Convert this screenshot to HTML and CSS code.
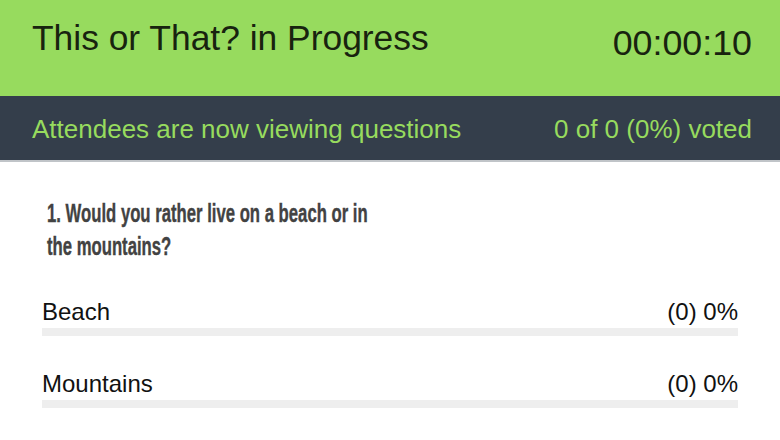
FILE: index.html
```html
<!DOCTYPE html>
<html lang="en">
<head>
<meta charset="utf-8">
<title>This or That? in Progress</title>
<link rel="stylesheet" href="styles.css">
</head>
<body>
  <header class="topbar">
    <h1 class="title">This or That? in Progress</h1>
    <div class="timer">00:00:10</div>
  </header>
  <div class="statusbar">
    <span class="status-text">Attendees are now viewing questions</span>
    <span class="status-count">0 of 0 (0%) voted</span>
  </div>
  <main class="content">
    <div class="question-wrap">
      <h2 class="question">1. Would you rather live on a beach or in the mountains?</h2>
    </div>
    <ul class="options">
      <li class="option">
        <div class="option-row"><span class="option-label">Beach</span><span class="option-value">(0) 0%</span></div>
        <div class="bar"><div class="bar-fill" style="width:0%"></div></div>
      </li>
      <li class="option">
        <div class="option-row"><span class="option-label">Mountains</span><span class="option-value">(0) 0%</span></div>
        <div class="bar"><div class="bar-fill" style="width:0%"></div></div>
      </li>
    </ul>
  </main>
</body>
</html>
```

FILE: styles.css
```css
* { box-sizing: border-box; }
html, body {
  margin: 0;
  padding: 0;
  background: #ffffff;
  font-family: "Liberation Sans", Arial, Helvetica, sans-serif;
}
.topbar {
  height: 96px;
  background: #97db5e;
  display: flex;
  justify-content: space-between;
  align-items: flex-start;
  padding: 18px 28px 0 32px;
  color: #18230f;
}
.title {
  margin: 0;
  font-size: 35.4px;
  line-height: 40px;
  font-weight: normal;
}
.timer {
  margin-top: 5px;
  font-size: 35.8px;
  line-height: 40px;
}
.statusbar {
  height: 66px;
  background: #343e4b;
  border-bottom: 2px solid #c0c4c8;
  display: flex;
  justify-content: space-between;
  align-items: flex-start;
  padding: 18px 28px 0 32px;
  color: #97db5e;
  font-size: 26px;
  line-height: 30px;
}
.content {
  padding: 35px 42px 0 42px;
}
.question-wrap {
  padding-left: 5px;
  height: 67px;
}
.question {
  margin: 0;
  width: 540px;
  font-size: 26.5px;
  line-height: 33px;
  font-weight: bold;
  color: #424242;
  -webkit-text-stroke: 0.4px #424242;
  transform: scaleX(0.63);
  transform-origin: left top;
}
.options {
  list-style: none;
  margin: 34px 0 0 0;
  padding: 0;
  display: flex;
  flex-direction: column;
  gap: 34px;
}
.option-row {
  display: flex;
  justify-content: space-between;
  font-size: 24px;
  line-height: 28px;
  color: #111111;
}
.bar {
  margin-top: 2px;
  height: 8px;
  background: #eeeeee;
}
.bar-fill {
  height: 100%;
  background: #97db5e;
}
```
